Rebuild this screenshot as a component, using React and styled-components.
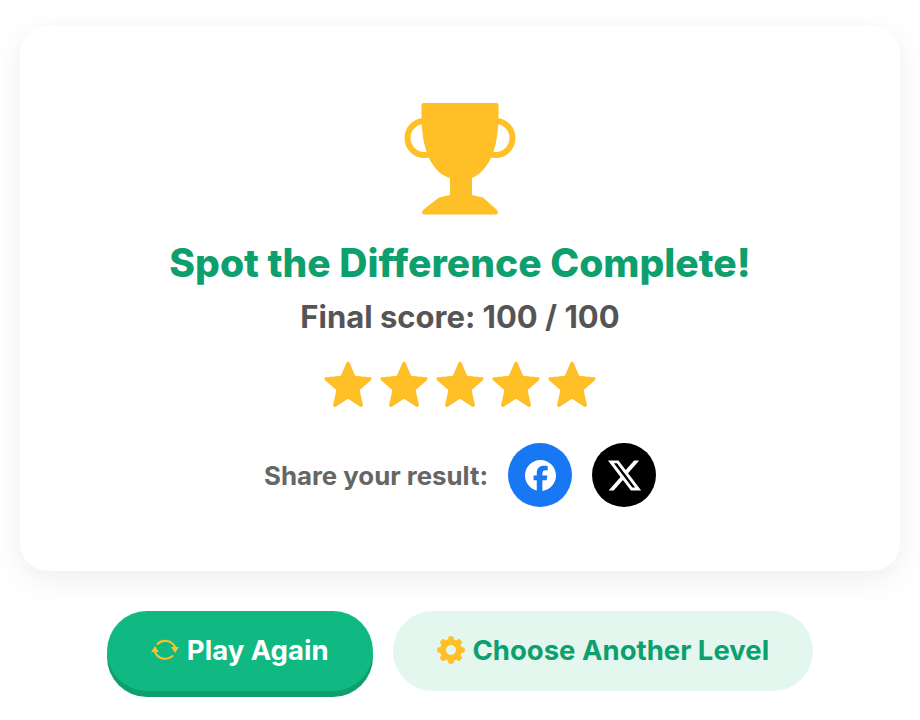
import React from 'react';
import styled, { createGlobalStyle } from 'styled-components';
import { FaFacebook, FaXTwitter } from 'react-icons/fa6';

const GlobalStyle = createGlobalStyle`
  html, body {
    margin: 0;
    background: #fff;
    font-family: Inter, "Liberation Sans", sans-serif;
    font-feature-settings: "liga" 0, "calt" 0, "dlig" 0;
  }
`;

const Page = styled.div`
  width: 920px;
  height: 720px;
  box-sizing: border-box;
  padding: 26px 20px 0;
  display: flex;
  flex-direction: column;
  align-items: center;
  overflow: hidden;
`;

const Card = styled.section`
  width: 100%;
  height: 545px;
  box-sizing: border-box;
  padding-top: 76px;
  background: #fff;
  border-radius: 28px;
  box-shadow: 0 8px 32px rgba(0, 0, 0, 0.07);
  display: flex;
  flex-direction: column;
  align-items: center;
`;

const Trophy = styled.svg`
  width: 112px;
  height: 114px;
  fill: #fec026;
  flex: none;
`;

const Title = styled.h1`
  margin: 24px 0 0;
  font-size: 39px;
  line-height: 46px;
  font-weight: 800;
  color: #0e9f6e;
`;

const Score = styled.p`
  margin: 12px 0 0;
  font-size: 31px;
  line-height: 38px;
  font-weight: 700;
  color: #555;
`;

const Stars = styled.div`
  margin-top: 21px;
  display: flex;
`;

const Star = styled.svg`
  width: 56px;
  height: 56px;
  fill: #fec026;
  stroke: #fec026;
  stroke-width: 1.4;
  stroke-linejoin: round;
`;

const ShareRow = styled.div`
  margin-top: 30px;
  display: flex;
  align-items: center;
  gap: 20px;
`;

const ShareLabel = styled.span`
  font-size: 25.8px;
  font-weight: 700;
  color: #666;
`;

const ShareButton = styled.a`
  width: 64px;
  height: 64px;
  border-radius: 50%;
  background: ${({ $bg }) => $bg};
  color: #fff;
  display: flex;
  align-items: center;
  justify-content: center;
`;

const Actions = styled.div`
  margin-top: 40px;
  display: flex;
  gap: 20px;
`;

const Button = styled.button`
  height: 80px;
  padding: 0 44px 2px;
  border: none;
  border-radius: 40px;
  display: flex;
  align-items: center;
  gap: 8px;
  font-family: inherit;
  font-feature-settings: inherit;
  font-size: 27.5px;
  font-weight: 700;
  color: ${({ $primary }) => ($primary ? '#fff' : '#0e9f6e')};
  background: ${({ $primary }) => ($primary ? '#10b981' : '#e3f7ef')};
  box-shadow: ${({ $primary }) => ($primary ? '0 6px 0 #0e9f6e' : 'none')};
`;

const GearTeeth = [0, 45, 90, 135, 180, 225, 270, 315];

const App = () => (
  <Page>
    <GlobalStyle />
    <Card>
      <Trophy viewBox="404 102 112 114">
        <circle cx="424.5" cy="138" r="17" fill="none" stroke="#fec026" strokeWidth="6" />
        <circle cx="495.5" cy="138" r="17" fill="none" stroke="#fec026" strokeWidth="6" />
        <path d="M423.500 103H496.500Q498.500 103 498.500 105V118C498 140 494 155 487 165C482 172 477 176 472 178V195L483 197.500L497 210Q499.500 214 496 214.500H424Q420.500 214 423 210L439 197.500L450 195V178C443 176 438 172 433 165C426 155 422 140 421.500 118V105Q421.500 103 423.500 103Z" />
      </Trophy>
      <Title>Spot the Difference Complete!</Title>
      <Score>Final score: 100 / 100</Score>
      <Stars>
        {[0, 1, 2, 3, 4].map((i) => (
          <Star key={i} viewBox="0 0 24 24">
            <polygon points="12,2.800 14.600,8.700 21.400,9.400 16.200,13.900 17.700,20.700 12,17.100 6.300,20.700 7.800,13.900 2.600,9.400 9.400,8.700" />
          </Star>
        ))}
      </Stars>
      <ShareRow>
        <ShareLabel>Share your result:</ShareLabel>
        <ShareButton $bg="#1877f2"><FaFacebook size={31} /></ShareButton>
        <ShareButton $bg="#000"><FaXTwitter size={37} /></ShareButton>
      </ShareRow>
    </Card>
    <Actions>
      <Button $primary>
        <svg width="28" height="28" viewBox="0 0 28 28" fill="none" stroke="#fec026" strokeWidth="2" strokeLinecap="round">
          <path d="M6.500 8A11 11 0 0 1 24 11" />
          <path d="M21.500 20A11 11 0 0 1 4 16" />
          <path d="M0 16L4 10L8 16Z" fill="#fec026" stroke="none" />
          <path d="M20 11L24 17L28 11Z" fill="#fec026" stroke="none" />
        </svg>
        Play Again
      </Button>
      <Button>
        <svg width="28" height="28" viewBox="0 0 28 28">
          <circle cx="14" cy="14" r="8" fill="none" stroke="#fec026" strokeWidth="6" />
          {GearTeeth.map((a) => (
            <rect key={a} x="11.200" y="0.200" width="5.600" height="6" rx="1.800" fill="#fec026" transform={`rotate(${a} 14 14)`} />
          ))}
        </svg>
        Choose Another Level
      </Button>
    </Actions>
  </Page>
);

export default App;
